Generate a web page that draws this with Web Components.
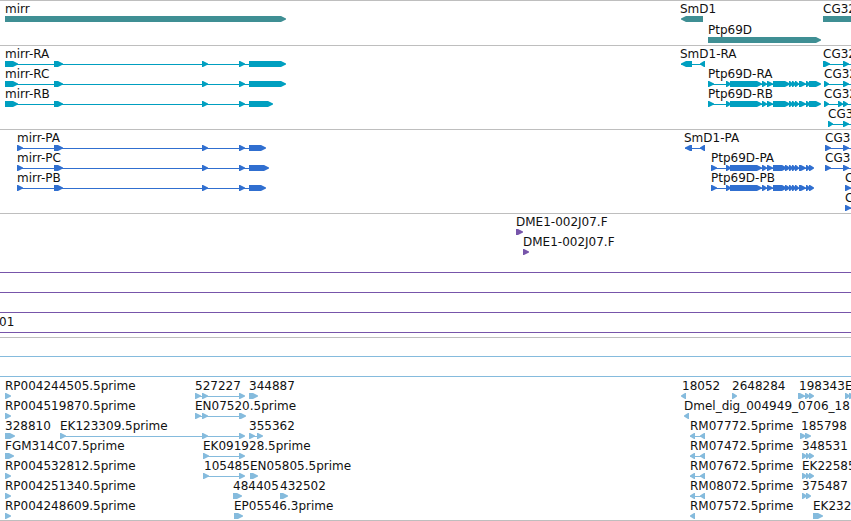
<!DOCTYPE html>
<html lang="en">
<head>
<meta charset="utf-8">
<title>Genome tracks</title>
<style>
  body { margin: 0; background: #fff; }
</style>
</head>
<body>
<genome-view>
  <feature-track kind="gene">
    <feature-row>
      <genome-feature start="5" blocks="5-286">mirr</genome-feature>
      <genome-feature start="680" blocks="681-703" reverse>SmD1</genome-feature>
      <genome-feature start="823" blocks="823-900">CG32</genome-feature>
    </feature-row>
    <feature-row>
      <genome-feature start="708" blocks="708-821">Ptp69D</genome-feature>
    </feature-row>
  </feature-track>

  <feature-track kind="transcript">
    <feature-row>
      <genome-feature start="5" blocks="5-18 54-63 202-208 239-245 249-286">mirr-RA</genome-feature>
      <genome-feature start="680" blocks="681-692 700-705" reverse>SmD1-RA</genome-feature>
      <genome-feature start="823" blocks="823-830 843-849 890-900">CG32</genome-feature>
    </feature-row>
    <feature-row>
      <genome-feature start="5" blocks="5-18 54-63 202-208 239-245 249-286">mirr-RC</genome-feature>
      <genome-feature start="708" blocks="708-714 726-731 730-762 762-767 767-773 773-790 789-793 792-796 795-799 799-806 806-810 809-821">Ptp69D-RA</genome-feature>
      <genome-feature start="824" blocks="824-829 843-849 890-900">CG32</genome-feature>
    </feature-row>
    <feature-row>
      <genome-feature start="5" blocks="5-18 54-63 202-208 239-245 249-273">mirr-RB</genome-feature>
      <genome-feature start="708" blocks="708-714 726-731 730-762 762-767 767-773 773-790 789-793 792-796 795-799 799-806 806-810 809-821">Ptp69D-RB</genome-feature>
      <genome-feature start="824" blocks="824-829 838-843 843-848 890-900">CG32</genome-feature>
    </feature-row>
    <feature-row>
      <genome-feature start="828" blocks="828-833 843-849 890-900">CG3</genome-feature>
    </feature-row>
  </feature-track>

  <feature-track kind="protein">
    <feature-row>
      <genome-feature start="17" blocks="17-23 54-63 202-208 239-245 249-266">mirr-PA</genome-feature>
      <genome-feature start="684" blocks="685-692 700-705" reverse>SmD1-PA</genome-feature>
      <genome-feature start="825" blocks="825-831 843-849 890-900">CG3</genome-feature>
    </feature-row>
    <feature-row>
      <genome-feature start="17" blocks="17-23 54-63 202-208 239-245 249-269">mirr-PC</genome-feature>
      <genome-feature start="711" blocks="711-717 726-731 730-762 762-767 767-773 773-787 785-790 789-793 792-796 795-799 799-806 806-810 809-814">Ptp69D-PA</genome-feature>
      <genome-feature start="825" blocks="825-831 843-849 890-900">CG3</genome-feature>
    </feature-row>
    <feature-row>
      <genome-feature start="17" blocks="17-23 54-63 202-208 239-245 249-266">mirr-PB</genome-feature>
      <genome-feature start="711" blocks="711-717 726-731 730-762 762-767 767-773 773-787 785-790 789-793 792-796 795-799 799-806 806-810 809-814">Ptp69D-PB</genome-feature>
      <genome-feature start="845" blocks="845-851 890-900">C</genome-feature>
    </feature-row>
    <feature-row>
      <genome-feature start="845" blocks="845-851 890-900">C</genome-feature>
    </feature-row>
  </feature-track>

  <feature-track kind="bac">
    <feature-row>
      <genome-feature start="516" blocks="516-523">DME1-002J07.F</genome-feature>
    </feature-row>
    <feature-row>
      <genome-feature start="523" blocks="523-529">DME1-002J07.F</genome-feature>
    </feature-row>
    <feature-row through></feature-row>
    <feature-row through></feature-row>
    <feature-row through></feature-row>
    <feature-row through>
      <genome-feature start="-1">01</genome-feature>
    </feature-row>
  </feature-track>

  <feature-track kind="est">
    <feature-row through></feature-row>
    <feature-row through></feature-row>
    <feature-row>
      <genome-feature start="5" blocks="5-11">RP004244505.5prime</genome-feature>
      <genome-feature start="195" blocks="195-201 202-208 239-245">527227</genome-feature>
      <genome-feature start="249" blocks="249-258">344887</genome-feature>
      <genome-feature start="682" blocks="681-686" reverse>18052</genome-feature>
      <genome-feature start="732" blocks="732-737">2648284</genome-feature>
      <genome-feature start="799" blocks="798-805 805-810 809-814">198343</genome-feature>
      <genome-feature start="845" blocks="845-850 849-855">E</genome-feature>
    </feature-row>
    <feature-row>
      <genome-feature start="5" blocks="5-11">RP004519870.5prime</genome-feature>
      <genome-feature start="195" blocks="195-201 202-208 239-246">EN07520.5prime</genome-feature>
      <genome-feature start="684" blocks="684-689" reverse>Dmel_dig_004949_0706_18</genome-feature>
    </feature-row>
    <feature-row>
      <genome-feature start="5" blocks="5-15">328810</genome-feature>
      <genome-feature start="60" blocks="60-66 202-208 239-245">EK123309.5prime</genome-feature>
      <genome-feature start="249" blocks="249-255 257-263">355362</genome-feature>
      <genome-feature start="690" blocks="690-695 700-705" reverse>RM07772.5prime</genome-feature>
      <genome-feature start="801" blocks="800-806 805-811">185798</genome-feature>
    </feature-row>
    <feature-row>
      <genome-feature start="5" blocks="5-14">FGM314C07.5prime</genome-feature>
      <genome-feature start="203" blocks="203-209 239-245">EK091928.5prime</genome-feature>
      <genome-feature start="690" blocks="690-695 700-705" reverse>RM07472.5prime</genome-feature>
      <genome-feature start="802" blocks="802-807 806-810 809-814">348531</genome-feature>
    </feature-row>
    <feature-row>
      <genome-feature start="5" blocks="5-11">RP004532812.5prime</genome-feature>
      <genome-feature start="204" blocks="203-209 239-245">105485</genome-feature>
      <genome-feature start="250" blocks="250-258">EN05805.5prime</genome-feature>
      <genome-feature start="690" blocks="690-695 700-705" reverse>RM07672.5prime</genome-feature>
      <genome-feature start="802" blocks="802-807 806-810 809-814">EK22585</genome-feature>
    </feature-row>
    <feature-row>
      <genome-feature start="5" blocks="5-11">RP004251340.5prime</genome-feature>
      <genome-feature start="233" blocks="233-242">484405</genome-feature>
      <genome-feature start="280" blocks="280-288">432502</genome-feature>
      <genome-feature start="690" blocks="690-695 700-705" reverse>RM08072.5prime</genome-feature>
      <genome-feature start="802" blocks="802-807 806-811">375487</genome-feature>
    </feature-row>
    <feature-row>
      <genome-feature start="5" blocks="5-11">RP004248609.5prime</genome-feature>
      <genome-feature start="234" blocks="234-243">EP05546.3prime</genome-feature>
      <genome-feature start="690" blocks="690-695" reverse>RM07572.5prime</genome-feature>
      <genome-feature start="813" blocks="813-823">EK232</genome-feature>
    </feature-row>
  </feature-track>
</genome-view>

<script>
const define = (name, template, connect) => {
  customElements.define(name, class extends HTMLElement {
    constructor() {
      super();
      this.attachShadow({ mode: "open" }).innerHTML = template;
    }
    connectedCallback() { if (connect) connect(this, this.shadowRoot); }
  });
};

define("genome-view", `
  <style>
    :host {
      display: flex; flex-direction: column;
      font: 12px/14px "DejaVu Sans", Verdana, sans-serif;
      color: #111; border-bottom: 1px solid #bebebe;
    }
  </style>
  <slot></slot>`);

define("feature-track", `
  <style>
    :host {
      display: flex; flex-direction: column;
      border-top: 1px solid #bebebe;
      padding-bottom: 3px; overflow: hidden;
      --row: 20px;
    }
    :host([kind="gene"]) { --ink: #3f8f94; --row: 21px; padding-bottom: 2px; }
    :host([kind="transcript"]) { --ink: #009fc0; }
    :host([kind="protein"]) { --ink: #306fd0; }
    :host([kind="bac"]) { --ink: #7755aa; }
    :host([kind="est"]) { --ink: #85bbdd; padding-bottom: 2px; }
  </style>
  <slot></slot>`);

define("feature-row", `
  <style>
    :host { display: block; position: relative; height: var(--row); }
    :host([through]) {
      background: linear-gradient(var(--ink), var(--ink)) 0 18px / 100% 1px no-repeat;
    }
  </style>
  <slot></slot>`);

/* A feature sits at its map coordinate: a name above a chain of arrow blocks. */
define("genome-feature", `
  <style>
    :host { position: absolute; top: 0; display: block; padding-top: 1px; white-space: nowrap; }
    .name { display: block; }
    svg { display: block; height: 6px; overflow: visible; fill: var(--ink); }
  </style>
  <span class="name"><slot></slot></span>
  <svg aria-hidden="true"></svg>`,
  (host, root) => {
    const start = Number(host.getAttribute("start"));
    host.style.left = start + "px";
    const svg = root.querySelector("svg");
    const blocks = (host.getAttribute("blocks") || "").split(" ").filter(Boolean)
      .map(b => b.split("-").map(n => Number(n) - start));
    if (!blocks.length) { svg.remove(); return; }
    const first = blocks[0][0], last = blocks[blocks.length - 1][1];
    svg.setAttribute("width", last);
    const shapes = blocks.map(([a, b]) => {
      const tip = Math.min(5, b - a - 1);
      return host.hasAttribute("reverse")
        ? `<path d="M${b} 0V6H${a + tip}L${a} 3.5V2.5L${a + tip} 0Z"/>`
        : `<path d="M${a} 0V6H${b - tip}L${b} 3.5V2.5L${b - tip} 0Z"/>`;
    });
    if (blocks.length > 1) {
      shapes.push(`<rect x="${first}" y="3" width="${last - first - 2}" height="1"/>`);
    }
    svg.innerHTML = shapes.join("");
  });
</script>
</body>
</html>
